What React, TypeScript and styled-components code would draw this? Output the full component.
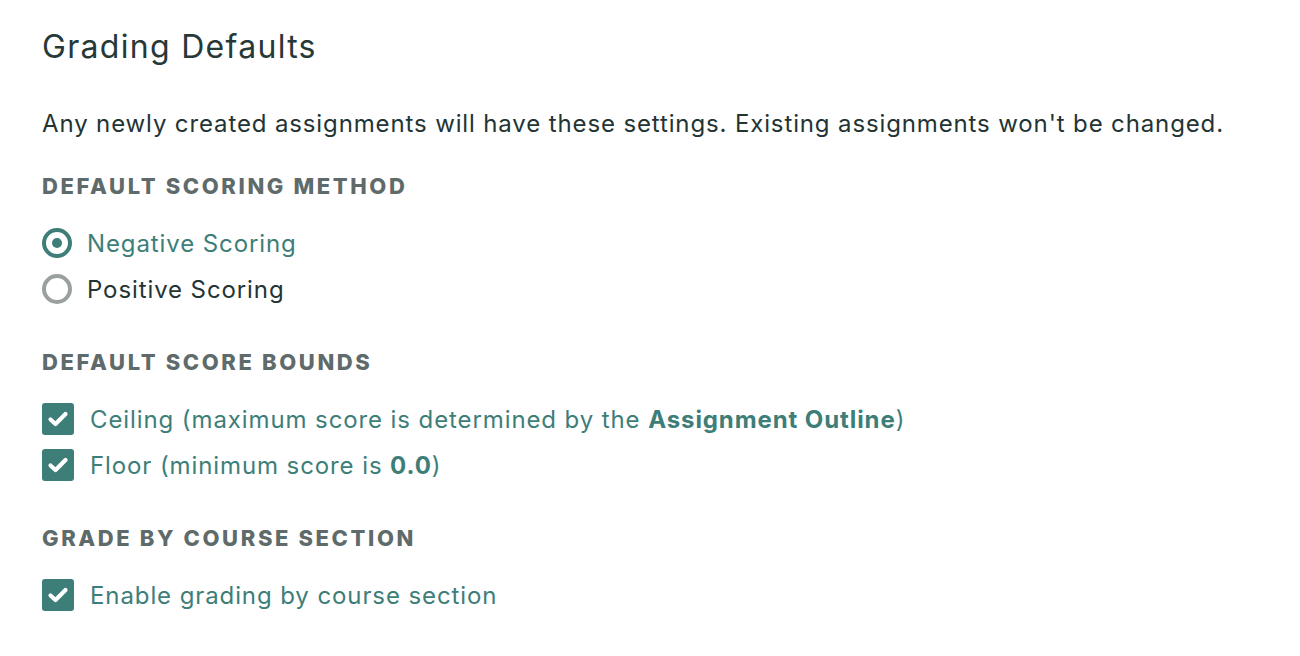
import styled, { createGlobalStyle } from 'styled-components'

const GlobalStyle = createGlobalStyle`
    html, body {
        margin: 0;
        padding: 0;
        background: #ffffff;
    }
    body {
        font-family: Inter, Lato, sans-serif;
        color: #233434;
    }
`

const TEAL = '#3d7e78'

const Page = styled.div`
    padding: 27px 42px 0;
`
const Heading = styled.h1`
    margin: 0 0 41px;
    font-size: 32px;
    line-height: 40px;
    font-weight: 400;
    letter-spacing: 1.3px;
    color: #263838;
`
const Intro = styled.p`
    margin: 0 0 32px;
    font-size: 24px;
    line-height: 32px;
    letter-spacing: 0.87px;
    color: #233434;
`
const Section = styled.section`
    margin-bottom: 36px;
`
const Label = styled.h2`
    margin: 0 0 20px;
    font-size: 22px;
    line-height: 28px;
    font-weight: 800;
    letter-spacing: 2.6px;
    text-transform: uppercase;
    color: #5f6b6a;
`
const Option = styled.label<{ $active?: boolean }>`
    display: flex;
    align-items: center;
    height: 46px;
    font-size: 24px;
    letter-spacing: 0.9px;
    color: ${(p) => (p.$active ? TEAL : '#233434')};
    b {
        font-weight: 700;
    }
`
const Radio = styled.span<{ $checked?: boolean }>`
    box-sizing: border-box;
    width: 30px;
    height: 30px;
    margin-right: 15px;
    border-radius: 50%;
    border: 4px solid ${(p) => (p.$checked ? TEAL : '#9aa09f')};
    display: flex;
    align-items: center;
    justify-content: center;
    &::after {
        content: '';
        display: ${(p) => (p.$checked ? 'block' : 'none')};
        width: 10px;
        height: 10px;
        border-radius: 50%;
        background: ${TEAL};
    }
`
const Box = styled.span`
    width: 32px;
    height: 32px;
    margin-right: 16px;
    border-radius: 3px;
    background: ${TEAL};
    display: flex;
    align-items: center;
    justify-content: center;
`

const Check = () => (
    <svg width="22" height="18" viewBox="0 0 22 18">
        <path
            d="M3.5 9.5 L8.5 14 L18.5 4"
            fill="none"
            stroke="#fff"
            strokeWidth="4.2"
            strokeLinecap="round"
            strokeLinejoin="round"
        />
    </svg>
)

const CheckOption = ({ children }: { children: React.ReactNode }) => (
    <Option $active>
        <Box>
            <Check />
        </Box>
        <span>{children}</span>
    </Option>
)

const App = () => {
    return (
        <>
            <GlobalStyle />
            <Page>
                <Heading>Grading Defaults</Heading>
                <Intro>
                    Any newly created assignments will have these settings. Existing
                    assignments won't be changed.
                </Intro>
                <Section>
                    <Label>Default Scoring Method</Label>
                    <Option $active>
                        <Radio $checked />
                        Negative Scoring
                    </Option>
                    <Option>
                        <Radio />
                        Positive Scoring
                    </Option>
                </Section>
                <Section>
                    <Label>Default Score Bounds</Label>
                    <CheckOption>
                        Ceiling (maximum score is determined by the <b>Assignment Outline</b>)
                    </CheckOption>
                    <CheckOption>
                        Floor (minimum score is <b>0.0</b>)
                    </CheckOption>
                </Section>
                <Section>
                    <Label>Grade by Course Section</Label>
                    <CheckOption>Enable grading by course section</CheckOption>
                </Section>
            </Page>
        </>
    )
}

export default App
